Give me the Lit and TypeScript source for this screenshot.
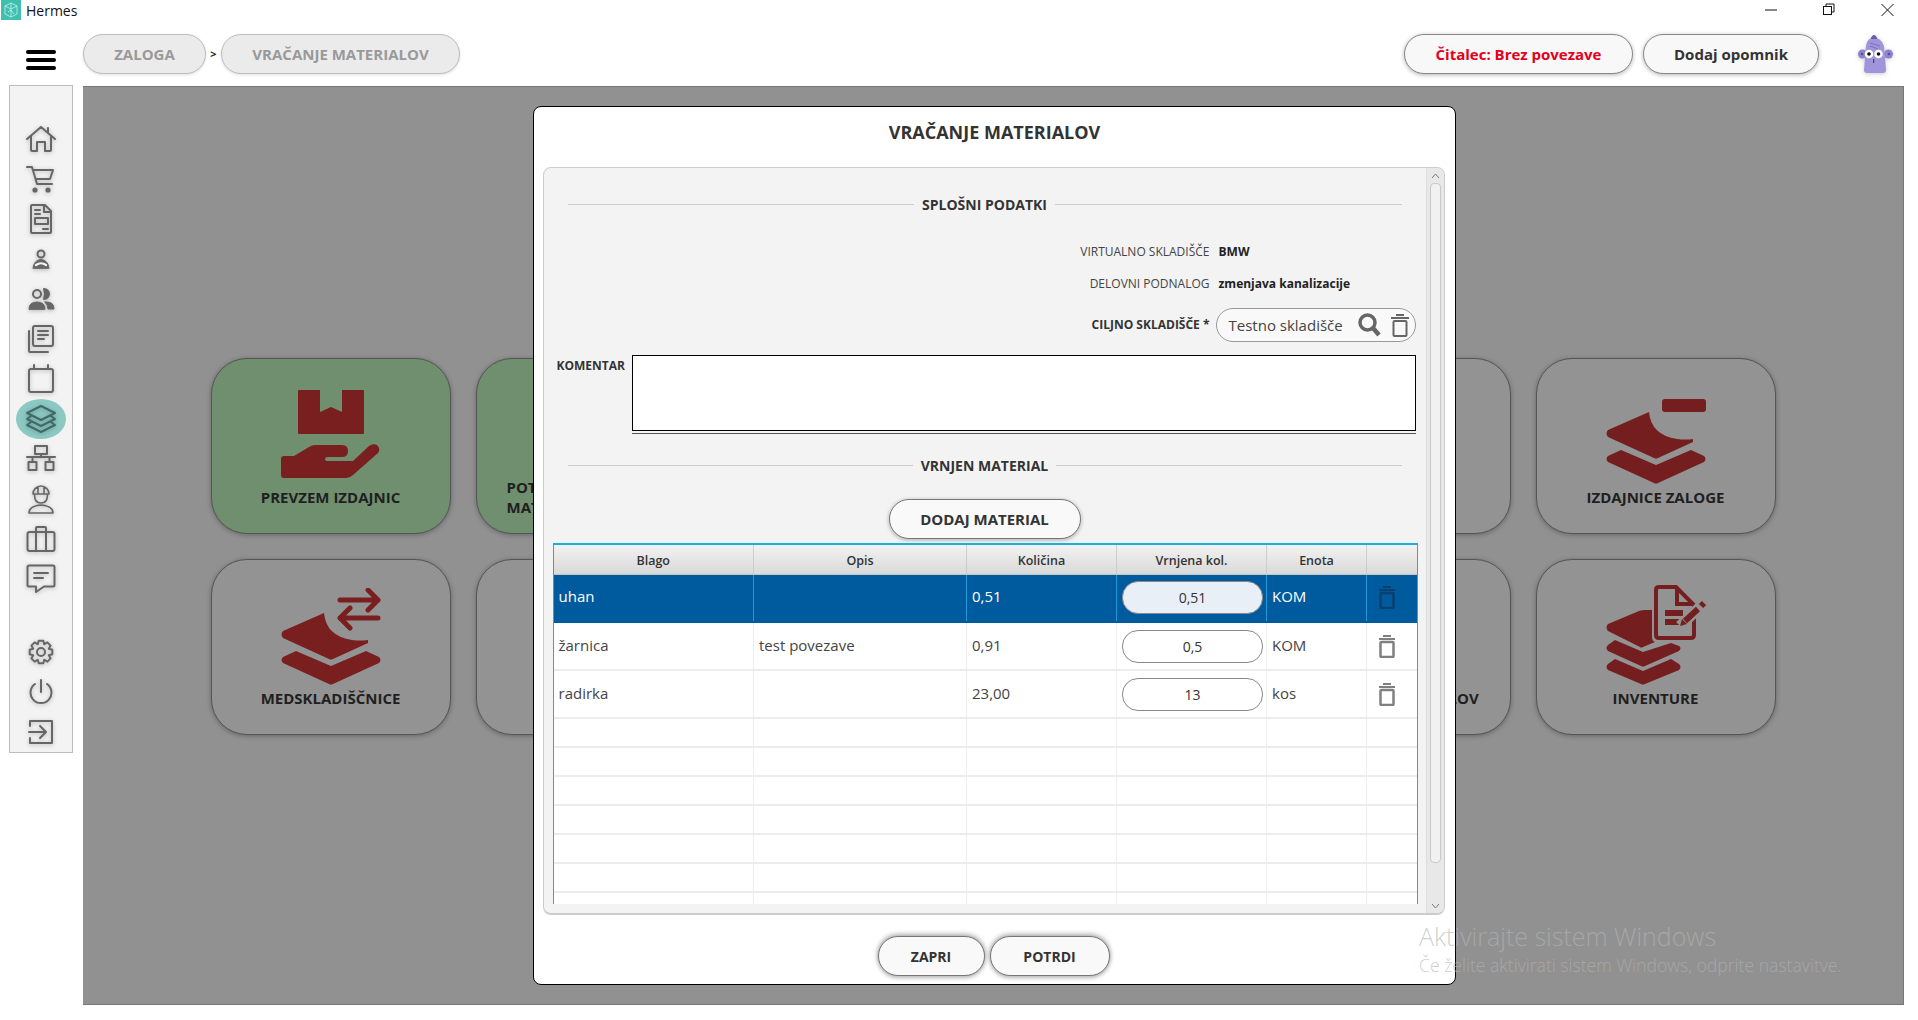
import { css, html, LitElement, svg } from "lit";
import { customElement } from "lit/decorators.js";
import { classMap } from "lit/directives/class-map.js";

const I = (body: unknown, box = 30) => html`<svg class="ico" width=${box} height=${box} viewBox="0 0 ${box} ${box}" fill="none" stroke="currentColor" stroke-width="2" stroke-linecap="round" stroke-linejoin="round">${body}</svg>`;

// gear outline, 8 teeth
function gearPath() {
  const pts: string[] = [];
  for (let i = 0; i < 8; i++) {
    const a = (i * Math.PI) / 4 - Math.PI / 2;
    const at = (r: number, d: number) => `${(15 + r * Math.cos(a + d)).toFixed(1)} ${(15 + r * Math.sin(a + d)).toFixed(1)}`;
    pts.push(at(8.5, -0.39), at(11.5, -0.2), at(11.5, 0.2), at(8.5, 0.39));
  }
  return "M" + pts.join(" L") + " Z";
}

const sideTop = [
  { k: "home", i: I(svg`<path d="M1 15 15 3l14 12M5 12v14q0 1 1 1h5v-9h8v9h5q1 0 1-1V12M22 4v5"/>`) },
  { k: "cart", i: I(svg`<path d="M1 3h5l5 17h15M7 6h20l-3 9H10"/><circle cx="9" cy="26" r="1.6" fill="currentColor"/><circle cx="22" cy="26" r="1.6" fill="currentColor"/>`) },
  { k: "doc", i: I(svg`<path d="M6 1h13l6 6v21q0 1-1 1H6q-1 0-1-1V2q0-1 1-1ZM18 2v6h6M9 6h5M9 10h5M17 25h5"/><rect x="9" y="14" width="13" height="6"/>`) },
  { k: "person", i: I(svg`<circle cx="15" cy="10" r="3.5"/><path d="M7 24q1-8 8-8.500 7 .5 8 8.500Z" fill="currentColor" stroke-width="1"/><path d="M10 21q5-3.500 10 0" stroke="#f3f3f3" stroke-width="2.200"/>`) },
  { k: "people", i: I(svg`<circle cx="11" cy="10" r="4"/><path d="M18 5a5 5 0 0 1 0 10q2-5 0-10Z" fill="currentColor"/><path d="M3 25q0-7 8-7t8 7ZM21 18q7 0 7 7h-6q0-4-3-7Z" fill="currentColor" stroke-width="1"/>`) },
  { k: "copies", i: I(svg`<rect x="7" y="2" width="20" height="20" rx="2"/><path d="M3 7v20q0 1 1 1h18M12 7h10M12 11h10M12 15h6"/>`) },
  { k: "calendar", i: I(svg`<rect x="3" y="5" width="24" height="23" rx="2"/><path d="M8 1v4M22 1v4"/>`) },
  { k: "layers", active: true, i: I(svg`<path d="M15 2l14 7-14 7L1 9ZM5 12l-4 3 14 7 14-7-4-3M5 18l-4 3 14 7 14-7-4-3"/>`) },
  { k: "network", i: I(svg`<rect x="9" y="2" width="12" height="8"/><path d="M15 10v3M1 13h28M6.500 13v5M23.500 13v5"/><rect x="2.500" y="18" width="8" height="8"/><rect x="19.500" y="18" width="8" height="8"/>`) },
  { k: "worker", i: I(svg`<path d="M7 10a8 8 0 0 1 16 0ZM12 3v6M18 3v6M8.500 11q0 8 6.500 8t6.500-8M3 29q0-7 12-8 12 1 12 8Z" stroke-width="1.600"/>`) },
  { k: "case", i: I(svg`<rect x="1.500" y="8" width="27" height="19" rx="2"/><path d="M10 27V4q0-1 1-1h8q1 0 1 1v23"/>`) },
  { k: "comment", i: I(svg`<path d="M3 1.500h24q1.500 0 1.500 1.500v18q0 1.500-1.500 1.500h-9L10 28v-5.500H3q-1.500 0-1.500-1.500V3q0-1.500 1.500-1.500ZM8 9h14M8 14h9"/>`) },
];

const sideBottom = [
  { k: "gear", i: I(svg`<path d=${gearPath()}/><circle cx="15" cy="15" r="4"/>`) },
  { k: "power", i: I(svg`<path d="M9 7a10.500 10.500 0 1 0 12 0M15 3v12"/>`) },
  { k: "exit", i: I(svg`<path d="M4 9V4h22v22H4v-5M3 15h16M14 9l6 6-6 6"/>`) },
];

const sheets = svg`
  <path d="M2 43 43 25q2 23 28 27 9 1 16 0v3L52 71q-2 1-4 0L2 50q-3-3.500 0-7Z"/>
  <path d="M15 63 50 78 85 63l13 6q3 3 0 6L52 96q-2 1-4 0L2 75q-3-3 0-6Z"/>`;

const bigIcons = {
  hand: html`<svg class="raised" width="100" height="88" viewBox="0 0 100 88" fill="#7a1f20">
    <path d="M18 0h21v22l11-5 11 5V0h21q1 0 1 1v42q0 1-1 1H18q-1 0-1-1V1q0-1 1-1Z"/>
    <path d="M0 69q0-3 3-3h10l15-9q3-2 6-2h27q6 0 6 6t-6 6H47q-3 0-3 2t3 2h25l16-15q4-3 8-1 4 4 1 8L72 85q-3 3-7 3H3q-3 0-3-3Z"/>
  </svg>`,
  transfer: html`<svg width="100" height="97" viewBox="0 0 100 97" fill="#7a1f20">
    ${sheets}
    <path d="M59 12h38M87 2l10 10-10 10M59 30h38M69 20 59 30l10 10" fill="none" stroke="#7a1f20" stroke-width="5" stroke-linecap="round" stroke-linejoin="round"/>
  </svg>`,
  minus: html`<svg width="100" height="85" viewBox="0 0 100 85" fill="#741e20">
    <rect x="56" width="44" height="13" rx="3"/>
    <g transform="translate(0 -12)">${sheets}</g>
  </svg>`,
  inventory: html`<svg width="100" height="100" viewBox="0 0 100 100" fill="#741e20">
    <path d="M2 39 33 26q3-1 6-1h7v27q0 4 3 5L37 62q-2 1-3 0L2 46q-3-3.500 0-7Z"/>
    <path d="M9 55l28 12 28-9 8 3q3 2 0 5L39 81q-2 1-4 0L2 66q-3-3 0-6Z"/>
    <path d="M9 74l28 12 28-12 8 5q3 3 0 6L39 99q-2 1-4 0L2 85q-3-3 0-6Z"/>
    <path d="M53 2h17l18 18v30q0 3-3 3H53q-3 0-3-3V5q0-3 3-3Z" fill="none" stroke="#741e20" stroke-width="4"/>
    <path d="M71 3v16h15" fill="none" stroke="#741e20" stroke-width="4"/>
    <rect x="59" y="25" width="18" height="6"/><rect x="59" y="34" width="16" height="6"/>
    <path d="M74 41 96 20" fill="none" stroke="#939393" stroke-width="11"/>
    <path d="M79 36 92 24M95 21l3-3" fill="none" stroke="#741e20" stroke-width="6"/>
    <path d="M74 41l2-7 5 5Z"/>
  </svg>`,
};

const trash = html`<svg class="trash" width="18" height="23" viewBox="0 0 18 23" fill="currentColor">
  <rect x="5" width="8" height="2"/><rect x="1" y="3" width="16" height="2"/>
  <rect x="2.500" y="7" width="13" height="15" rx="1" fill="none" stroke="currentColor" stroke-width="2.500"/>
</svg>`;

const cards = [
  { label: "PREVZEM IZDAJNIC", icon: bigIcons.hand, green: true },
  { label: "POTRDITEV MATERIALA", green: true, wrap: true },
  {},
  {},
  { label: "PREGLED ZALOGE" },
  { label: "IZDAJNICE ZALOGE", icon: bigIcons.minus },
  { label: "MEDSKLADIŠČNICE", icon: bigIcons.transfer },
  {},
  {},
  {},
  { label: "VRAČANJE MATERIALOV" },
  { label: "INVENTURE", icon: bigIcons.inventory },
] as { label?: string; icon?: unknown; green?: boolean; wrap?: boolean }[];

const rows = [
  { name: "uhan", opis: "", qty: "0,51", ret: "0,51", unit: "KOM", sel: true },
  { name: "žarnica", opis: "test povezave", qty: "0,91", ret: "0,5", unit: "KOM" },
  { name: "radirka", opis: "", qty: "23,00", ret: "13", unit: "kos" },
];

@customElement("app-root")
export class AppRoot extends LitElement {
  static styles = css`
    :host {
      display: block;
      font-family: "Open Sans", "Noto Sans", sans-serif;
      color: #333;
    }
    .app {
      position: relative;
      width: 1918px;
      height: 1020px;
      overflow: hidden;
      background: #fff;
    }

    .titlebar {
      height: 20px;
      display: flex;
      align-items: center;
      font-size: 14px;
      color: #111;
      padding-left: 1px;
    }
    .titlebar .name { margin-left: 5px; }
    .winctl { margin-left: auto; margin-right: 24px; display: flex; gap: 46px; }
    .winctl svg { display: block; }

    .topbar {
      height: 65px;
      display: flex;
      align-items: flex-start;
      padding: 14px 27px 0 26px;
      box-sizing: border-box;
    }
    .burger {
      width: 30px;
      margin: 16px 27px 0 0;
      display: flex;
      flex-direction: column;
      gap: 4px;
    }
    .burger i { display: block; height: 4px; border-radius: 2px; background: #000; }
    .pill {
      height: 40px;
      box-sizing: border-box;
      border-radius: 20px;
      display: flex;
      align-items: center;
      justify-content: center;
      font-size: 15px;
      font-weight: 700;
    }
    .crumb {
      background: #ebebeb;
      border: 1px solid #bdbdbd;
      color: #999;
      box-shadow: 0 1px 3px rgba(0, 0, 0, 0.12);
    }
    .sep { width: 15px; text-align: center; font-size: 11px; font-weight: 700; line-height: 40px; color: #222; }
    .action {
      background: #f8f8f8;
      border: 1px solid #888;
      box-shadow: 0 1px 4px rgba(0, 0, 0, 0.3);
      color: #333;
    }
    .red { color: #e3001b; }
    .spacer { flex: 1; }
    .avatar { display: block; flex: none; margin: 0 -2px 0 39px; filter: drop-shadow(0 1px 2px rgba(0, 0, 0, 0.2)); }

    .main { display: flex; height: 935px; }
    .sidebar {
      width: 64px;
      height: 668px;
      box-sizing: border-box;
      margin-left: 9px;
      padding-top: 33px;
      background: #f3f3f3;
      border: 1px solid #bdbdbd;
      display: flex;
      flex-direction: column;
      align-items: center;
      color: #666;
    }
    .slot {
      width: 50px;
      height: 40px;
      flex: none;
      display: flex;
      align-items: center;
      justify-content: center;
      border-radius: 50%;
    }
    .slot.active { background: #8cc9c3; color: #3e6a68; }
    .gap { height: 33px; flex: none; }
    .ico { display: block; filter: drop-shadow(0 1px 2px rgba(0, 0, 0, 0.25)); }

    .content {
      width: 1821px;
      height: 919px;
      box-sizing: border-box;
      margin: 1px 0 0 10px;
      background: #919191;
      border: 1px solid #777;
      border-left: 0;
      display: flex;
      align-items: center;
      justify-content: center;
    }
    .grid {
      display: grid;
      grid-template-columns: repeat(6, 240px);
      grid-auto-rows: 176px;
      column-gap: 25px;
      row-gap: 25px;
      padding-top: 2px;
    }
    .card {
      box-sizing: border-box;
      border: 1px solid #555;
      border-radius: 36px;
      background: #939393;
      box-shadow: 0 1px 5px rgba(0, 0, 0, 0.3);
      display: flex;
      flex-direction: column;
      align-items: center;
    }
    .card.green { background: #6f8f6f; }
    .icon-box { height: 125px; flex: none; display: flex; align-items: flex-end; }
    .icon-box svg { display: block; }
    .icon-box svg.raised { margin-bottom: 6px; }
    .label {
      margin-top: 3px;
      font-size: 15px;
      font-weight: 700;
      line-height: 20px;
      color: #1f1f1f;
      white-space: nowrap;
    }
    .card.wrap .label {
      margin: -7px 0 0 30px;
      align-self: flex-start;
      width: 120px;
      white-space: normal;
    }

    .modal {
      position: absolute;
      left: 533px;
      top: 106px;
      width: 923px;
      height: 879px;
      box-sizing: border-box;
      background: #fff;
      border: 1px solid #000;
      border-radius: 8px;
      display: flex;
      flex-direction: column;
      align-items: center;
    }
    .modal h1 {
      margin: 0;
      height: 60px;
      flex: none;
      font-size: 18px;
      font-weight: 700;
      line-height: 50px;
      color: #333;
    }
    .panel {
      width: 902px;
      height: 748px;
      margin-left: -2px;
      box-sizing: border-box;
      flex: none;
      display: flex;
      background: #f3f3f3;
      border: 1px solid #ccc;
      border-bottom-width: 2px;
      border-radius: 8px;
      overflow: hidden;
    }
    .body { flex: 1; min-width: 0; padding-top: 26px; display: flex; flex-direction: column; }

    .scrollbar {
      width: 17px;
      flex: none;
      display: flex;
      flex-direction: column;
      align-items: center;
      background: #e8e8e8;
      border-left: 1px solid #ddd;
    }
    .chev { height: 15px; flex: none; display: flex; align-items: center; justify-content: center; }
    .thumb {
      width: 11px;
      height: 680px;
      flex: none;
      box-sizing: border-box;
      background: #f1f1f1;
      border: 1px solid #c8c8c8;
      border-radius: 4px;
    }
    .track { flex: 1; }

    .section {
      margin: 0 24px;
      height: 20px;
      flex: none;
      display: flex;
      align-items: center;
      gap: 8px;
      font-size: 14px;
      font-weight: 700;
      color: #333;
    }
    .section::before,
    .section::after { content: ""; flex: 1; height: 1px; background: #ccc; }

    .fields {
      margin-top: 27px;
      display: grid;
      grid-template-columns: 666px auto;
      grid-template-rows: 20px 20px 37px;
      row-gap: 12px;
      column-gap: 9px;
      align-items: center;
      font-size: 12px;
    }
    .fields .k { text-align: right; color: #444; }
    .fields .k.strong { font-weight: 700; color: #333; align-self: end; line-height: 34px; }
    .fields .v { font-weight: 700; color: #222; }
    .lookup {
      align-self: end;
      width: 200px;
      height: 34px;
      margin-left: -3px;
      box-sizing: border-box;
      background: #f9f9f9;
      border: 1px solid #999;
      border-radius: 17px;
      padding: 0 5px 0 12px;
      display: flex;
      align-items: center;
      font-size: 15px;
      color: #444;
    }
    .lookup span { flex: 1; white-space: nowrap; }
    .lookup svg { display: block; color: #666; flex: none; }

    .comment { margin: 13px 0 0 13px; display: flex; gap: 6px; align-items: flex-start; flex: none; }
    .comment label { width: 69px; margin-top: 2px; font-size: 12px; line-height: 18px; font-weight: 700; color: #333; white-space: nowrap; }
    .comment .ta {
      width: 784px;
      height: 76px;
      box-sizing: border-box;
      background: #fff;
      border: 1px solid #000;
      box-shadow: 0 2px 0 #f3f3f3, 0 3px 0 #555;
    }

    .section.second { margin-top: 24px; }
    .add-row { margin-top: 24px; display: flex; justify-content: center; flex: none; }
    .btn {
      box-sizing: border-box;
      background: #f9f9f9;
      border: 1px solid #777;
      border-radius: 20px;
      height: 40px;
      font: 700 15px "Open Sans", sans-serif;
      color: #333;
      box-shadow: 0 1px 4px rgba(0, 0, 0, 0.3);
      padding: 0;
    }
    .add { width: 192px; }

    .table-wrap {
      margin: 4px 0 0 9px;
      width: 865px;
      height: 361px;
      flex: none;
      box-sizing: border-box;
      border: 1px solid #19aee0;
      border-top-width: 2px;
      border-bottom: 0;
      overflow: hidden;
      background: #fff;
    }
    table { border-collapse: collapse; table-layout: fixed; width: 863px; font-size: 15px; }
    th {
      height: 29px;
      padding: 2px 0 0;
      box-sizing: border-box;
      font-size: 12.500px;
      font-weight: 600;
      color: #333;
      background: linear-gradient(#f2f2f2, #d9d9d9);
      border-right: 1px solid #ccc;
      border-bottom: 1px solid #c4c4c4;
    }
    td {
      padding: 0 4px 3px 5px;
      border-right: 1px solid #eee;
      border-bottom: 2px solid #ececec;
      color: #444;
      white-space: nowrap;
      box-sizing: border-box;
    }
    th:last-child,
    td:last-child { border-right: 0; }
    tr.data td { height: 48px; }
    tr.empty td { height: 29px; }
    tr.sel td { background: #005a9e; color: #fff; border-right-color: #1a9bd8; border-bottom-color: #005a9e; }
    td.ret { padding: 0 4px 0 5px; }
    .num {
      display: block;
      width: 141px;
      height: 33px;
      box-sizing: border-box;
      border: 1px solid #888;
      border-radius: 16px;
      background: #fff;
      text-align: center;
      font: 14px "Open Sans", sans-serif;
      color: #333;
      outline: none;
      padding: 0;
    }
    tr.sel .num { background: #e8eff7; }
    td.del { padding: 0 0 0 11px; color: #808080; }
    tr.sel td.del { color: #0b3f70; }
    .trash { display: block; }

    .footer { margin-top: 21px; display: flex; gap: 5px; margin-left: -2px; }
    .footer .btn { font-size: 14px; box-shadow: 0 -2px 5px rgba(0, 0, 0, 0.3), 0 2px 4px rgba(0, 0, 0, 0.25); }
    .close { width: 107px; }
    .ok { width: 120px; }

    .activate {
      position: absolute;
      left: 1419px;
      top: 918px;
      color: rgba(180, 180, 180, 0.65);
      pointer-events: none;
      white-space: nowrap;
      font-weight: 300;
    }
    .activate .a { font-size: 25px; line-height: 36px; }
    .activate .b { font-size: 17.600px; line-height: 22px; }
  `;

  render() {
    return html`
      <div class="app">
        <div class="titlebar">
          <svg width="20" height="20" viewBox="0 0 20 20" fill="none" stroke="#c9efe9" stroke-width=".8">
            <rect width="20" height="20" fill="#3fbfb0" stroke="none"/>
            <path d="M10 3l6 3v8l-6 3-6-3V6ZM10 3v14M4 6l6 3 6-3M7 12l3-2 3 4"/>
          </svg>
          <span class="name">Hermes</span>
          <div class="winctl">
            <svg width="12" height="20" viewBox="0 0 12 20" stroke="#111"><path d="M0 10h12"/></svg>
            <svg width="12" height="20" viewBox="0 0 12 20" stroke="#111" fill="none"><path d="M3 6V4h8v8H9"/><rect x=".5" y="6.500" width="8" height="8"/></svg>
            <svg width="13" height="20" viewBox="0 0 13 20" stroke="#111"><path d="M.5 4l12 12M12.500 4l-12 12"/></svg>
          </div>
        </div>

        <div class="topbar">
          <div class="burger"><i></i><i></i><i></i></div>
          <div class="pill crumb" style="width:123px">ZALOGA</div>
          <div class="sep">&gt;</div>
          <div class="pill crumb" style="width:239px">VRAČANJE MATERIALOV</div>
          <div class="spacer"></div>
          <div class="pill action red" style="width:229px">Čitalec: Brez povezave</div>
          <div class="pill action" style="width:176px;margin-left:10px">Dodaj opomnik</div>
          <svg class="avatar" width="35" height="40" viewBox="0 0 35 40">
            <path d="M12 6q2-5 4-5t4 5Z" fill="#6b5bab"/>
            <circle cx="4.500" cy="20" r="4.500" fill="#8d82cc"/><circle cx="30.500" cy="20" r="4.500" fill="#8d82cc"/>
            <circle cx="4" cy="20" r="1.300" fill="#5a4d96"/><circle cx="31" cy="20" r="1.300" fill="#5a4d96"/>
            <path d="M8 12q1-6 4-7h9q4 3 5 7l2 24q0 3-3 3H9q-3 0-3-3Z" fill="#a095da"/>
            <path d="M12 9l10 3M12 12l8 3" stroke="#7d6fbe" fill="none"/>
            <circle cx="11" cy="20" r="4.300" fill="#fff"/><circle cx="20.500" cy="20" r="4.300" fill="#fff"/>
            <circle cx="11" cy="20" r="1.800" fill="#111"/><circle cx="20.500" cy="20" r="1.800" fill="#111"/>
            <path d="M15.700 25v4" stroke="#333"/>
          </svg>
        </div>

        <div class="main">
          <nav class="sidebar">
            ${sideTop.map((s) => html`<div class=${classMap({ slot: true, active: !!s.active })}>${s.i}</div>`)}
            <div class="gap"></div>
            ${sideBottom.map((s) => html`<div class="slot">${s.i}</div>`)}
          </nav>
          <div class="content">
            <div class="grid">
              ${cards.map(
                (c) => html`
                  <div class=${classMap({ card: true, green: !!c.green, wrap: !!c.wrap })}>
                    <div class="icon-box">${c.icon ?? ""}</div>
                    <div class="label">${c.label ?? ""}</div>
                  </div>
                `
              )}
            </div>
          </div>
        </div>

        <div class="modal">
          <h1>VRAČANJE MATERIALOV</h1>
          <div class="panel">
            <div class="body">
              <div class="section">SPLOŠNI PODATKI</div>
              <div class="fields">
                <div class="k">VIRTUALNO SKLADIŠČE</div><div class="v">BMW</div>
                <div class="k">DELOVNI PODNALOG</div><div class="v">zmenjava kanalizacije</div>
                <div class="k strong">CILJNO SKLADIŠČE *</div>
                <div class="lookup">
                  <span>Testno skladišče</span>
                  <svg width="23" height="24" viewBox="0 0 23 24" fill="none" stroke="currentColor" stroke-width="3.500"><circle cx="9.500" cy="9.500" r="7.500"/><path d="M15 15l6 7" stroke-width="4.500"/></svg>
                  <svg width="20" height="23" viewBox="0 0 20 23" fill="currentColor" style="margin-left:9px"><rect x="6" width="8" height="2"/><rect x="1" y="3" width="18" height="2"/><rect x="3.500" y="7" width="13" height="15" rx="1" fill="none" stroke="currentColor" stroke-width="2"/></svg>
                </div>
              </div>
              <div class="comment">
                <label>KOMENTAR</label>
                <div class="ta"></div>
              </div>
              <div class="section second">VRNJEN MATERIAL</div>
              <div class="add-row"><button class="btn add">DODAJ MATERIAL</button></div>
              <div class="table-wrap">
                <table>
                  <colgroup><col style="width:200px"/><col style="width:213px"/><col style="width:150px"/><col style="width:150px"/><col style="width:100px"/><col style="width:50px"/></colgroup>
                  <thead><tr><th>Blago</th><th>Opis</th><th>Količina</th><th>Vrnjena kol.</th><th>Enota</th><th></th></tr></thead>
                  <tbody>
                    ${rows.map(
                      (r) => html`
                        <tr class=${classMap({ data: true, sel: !!r.sel })}>
                          <td>${r.name}</td>
                          <td>${r.opis}</td>
                          <td>${r.qty}</td>
                          <td class="ret"><input class="num" .value=${r.ret} readonly /></td>
                          <td>${r.unit}</td>
                          <td class="del">${trash}</td>
                        </tr>
                      `
                    )}
                    ${[0, 1, 2, 3, 4, 5, 6].map(
                      () => html`<tr class="empty"><td></td><td></td><td></td><td></td><td></td><td></td></tr>`
                    )}
                  </tbody>
                </table>
              </div>
            </div>
            <div class="scrollbar">
              <div class="chev"><svg width="9" height="6" viewBox="0 0 9 6" fill="none" stroke="#777"><path d="M1 5l3.500-4L8 5"/></svg></div>
              <div class="thumb"></div>
              <div class="track"></div>
              <div class="chev"><svg width="9" height="6" viewBox="0 0 9 6" fill="none" stroke="#777"><path d="M1 1l3.500 4L8 1"/></svg></div>
            </div>
          </div>
          <div class="footer">
            <button class="btn close">ZAPRI</button>
            <button class="btn ok">POTRDI</button>
          </div>
        </div>

        <div class="activate">
          <div class="a">Aktivirajte sistem Windows</div>
          <div class="b">Če želite aktivirati sistem Windows, odprite nastavitve.</div>
        </div>
      </div>
    `;
  }
}
